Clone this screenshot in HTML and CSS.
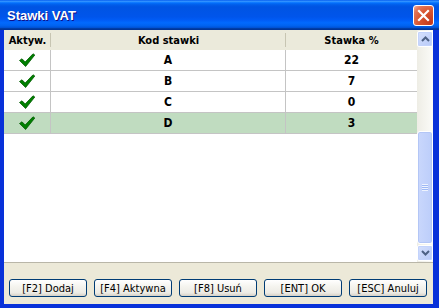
FILE: index.html
```html
<!DOCTYPE html>
<html lang="pl">
<head>
    <meta charset="UTF-8">
    <title>Stawki VAT</title>
    <link rel="stylesheet" href="styles.css">
</head>
<body>
    <div class="window">
        <div class="titlebar">
            <span class="title">Stawki VAT</span>
            <button class="close-btn">
                <svg width="13" height="13" viewBox="0 0 13 13"><path d="M2 2 L11 11 M11 2 L2 11" stroke="#fff" stroke-width="2.2" stroke-linecap="square"/></svg>
            </button>
        </div>

        <div class="client">
            <div class="grid">
                <table class="rates">
                    <thead>
                        <tr>
                            <th class="col-active">Aktyw.</th>
                            <th class="col-code">Kod stawki</th>
                            <th class="col-rate">Stawka %</th>
                        </tr>
                    </thead>
                    <tbody>
                        <tr>
                            <td><svg class="check" width="16" height="14" viewBox="0 0 16 14"><path d="M0.5 7.5 L3 5.8 L6.2 9 L14 0.8 L15.8 2 L6.6 13.5 Z" fill="#008000" stroke="#005a00" stroke-width="0.8" stroke-linejoin="round"/></svg></td>
                            <td>A</td>
                            <td>22</td>
                        </tr>
                        <tr>
                            <td><svg class="check" width="16" height="14" viewBox="0 0 16 14"><path d="M0.5 7.5 L3 5.8 L6.2 9 L14 0.8 L15.8 2 L6.6 13.5 Z" fill="#008000" stroke="#005a00" stroke-width="0.8" stroke-linejoin="round"/></svg></td>
                            <td>B</td>
                            <td>7</td>
                        </tr>
                        <tr>
                            <td><svg class="check" width="16" height="14" viewBox="0 0 16 14"><path d="M0.5 7.5 L3 5.8 L6.2 9 L14 0.8 L15.8 2 L6.6 13.5 Z" fill="#008000" stroke="#005a00" stroke-width="0.8" stroke-linejoin="round"/></svg></td>
                            <td>C</td>
                            <td>0</td>
                        </tr>
                        <tr class="selected">
                            <td><svg class="check" width="16" height="14" viewBox="0 0 16 14"><path d="M0.5 7.5 L3 5.8 L6.2 9 L14 0.8 L15.8 2 L6.6 13.5 Z" fill="#008000" stroke="#005a00" stroke-width="0.8" stroke-linejoin="round"/></svg></td>
                            <td>D</td>
                            <td>3</td>
                        </tr>
                    </tbody>
                </table>

                <div class="scrollbar">
                    <div class="sb-btn">
                        <svg width="9" height="6" viewBox="0 0 9 6"><path d="M1 5 L4.5 1.5 L8 5" fill="none" stroke="#4d6185" stroke-width="2"/></svg>
                    </div>
                    <div class="sb-track">
                        <div class="sb-thumb">
                            <span class="grip"></span>
                        </div>
                    </div>
                    <div class="sb-btn">
                        <svg width="9" height="6" viewBox="0 0 9 6"><path d="M1 1 L4.5 4.5 L8 1" fill="none" stroke="#4d6185" stroke-width="2"/></svg>
                    </div>
                </div>
            </div>

            <div class="actions">
                <button class="xp-btn">[F2] Dodaj</button>
                <button class="xp-btn">[F4] Aktywna</button>
                <button class="xp-btn">[F8] Usuń</button>
                <button class="xp-btn">[ENT] OK</button>
                <button class="xp-btn">[ESC] Anuluj</button>
            </div>
        </div>
    </div>
</body>
</html>
```

FILE: styles.css
```css
body { margin: 0; background: #fff; font-family: "DejaVu Sans Condensed", "DejaVu Sans", sans-serif; font-size: 11px; }
.window { width: 439px; height: 308px; display: flex; flex-direction: column; background: #0831d9; box-sizing: border-box; overflow: hidden; }

/* title bar */
.titlebar { height: 30px; flex: none; display: flex; align-items: center; justify-content: space-between; padding: 1px 5px 0 7px; box-sizing: border-box;
    background: linear-gradient(to bottom, #0058ee 0%, #3593ff 4%, #288eff 6%, #127dff 8%, #036ffc 10%, #0262ee 14%, #0057e5 20%, #0054e3 24%, #0055eb 56%, #005bf5 66%, #026afe 76%, #0062ef 86%, #0052d6 92%, #0040ab 94%, #003092 100%); }
.title { color: #fff; font-family: "Liberation Sans", Arial, sans-serif; font-weight: bold; font-size: 13px; text-shadow: 1px 1px #0f1089; }
.close-btn { width: 21px; height: 21px; padding: 0; border: 1px solid #fff; border-radius: 3px; display: flex; align-items: center; justify-content: center;
    background: radial-gradient(circle at 85% 85%, #c43a1c 0%, #d9552f 50%, #e2765a 80%, #f0b3a0 100%); }

/* client */
.client { flex: 1; display: flex; flex-direction: column; margin: 0 6px 4px 4px; background: #ece9d8; }
.grid { height: 232px; flex: none; display: flex; background: #fff; border-bottom: 1px solid #b9b6a8; }

.rates { flex: 1; align-self: flex-start; border-collapse: separate; border-spacing: 0; table-layout: fixed; }
.rates th { height: 20px; padding: 0; box-sizing: border-box; font-weight: bold; text-align: center; color: #000;
    background: linear-gradient(#c7c5b2, #c7c5b2) right 3px / 1px 14px no-repeat, #ebeadb; }
.rates th.col-rate { background: #ebeadb; }
.rates .col-active { width: 47px; }
.rates .col-code { width: 235px; }
.rates td { height: 21px; padding: 0; box-sizing: border-box; text-align: center; font-weight: bold; font-size: 12px; border-bottom: 1px solid #c4c4c4; border-right: 1px solid #c4c4c4; }
.rates td:last-child { border-right: none; }
.rates tr.selected td { background: #c0dcc0; }
.check { display: block; margin: 0 auto; }

/* scrollbar */
.scrollbar { width: 16px; flex: none; display: flex; flex-direction: column; padding: 1px 0 1px 0; box-sizing: border-box;
    background: linear-gradient(to right, #eeede5, #fbfbf8); }
.sb-btn { height: 16px; flex: none; display: flex; align-items: center; justify-content: center; border: 1px solid #fff; border-radius: 2px; box-sizing: border-box;
    background: linear-gradient(135deg, #d6e1fd, #b7c9f8); box-shadow: inset 0 0 0 1px #c3d3fc; }
.sb-track { flex: 1; display: flex; flex-direction: column; justify-content: flex-end; padding-bottom: 1px; }
.sb-thumb { height: 111px; display: flex; align-items: center; justify-content: center; border: 1px solid #fff; border-radius: 3px;
    background: linear-gradient(to right, #c9d7fc, #bccdfa); box-shadow: inset 0 0 0 1px #b3c6f6; }
.grip { width: 6px; height: 7px; background: repeating-linear-gradient(to bottom, #eef3fe 0 1px, #9db8f5 1px 2px); }

/* buttons */
.actions { flex: 1; display: flex; gap: 7px; padding: 16px 0 0 5px; }
.xp-btn { width: 78px; height: 18px; padding: 0; font-family: inherit; font-size: 11px; color: #000; border: 1px solid #003c74; border-radius: 3px;
    background: linear-gradient(to bottom, #ffffff 0%, #f5f4ef 40%, #ecebe5 80%, #d6d0c5 100%); }
```
